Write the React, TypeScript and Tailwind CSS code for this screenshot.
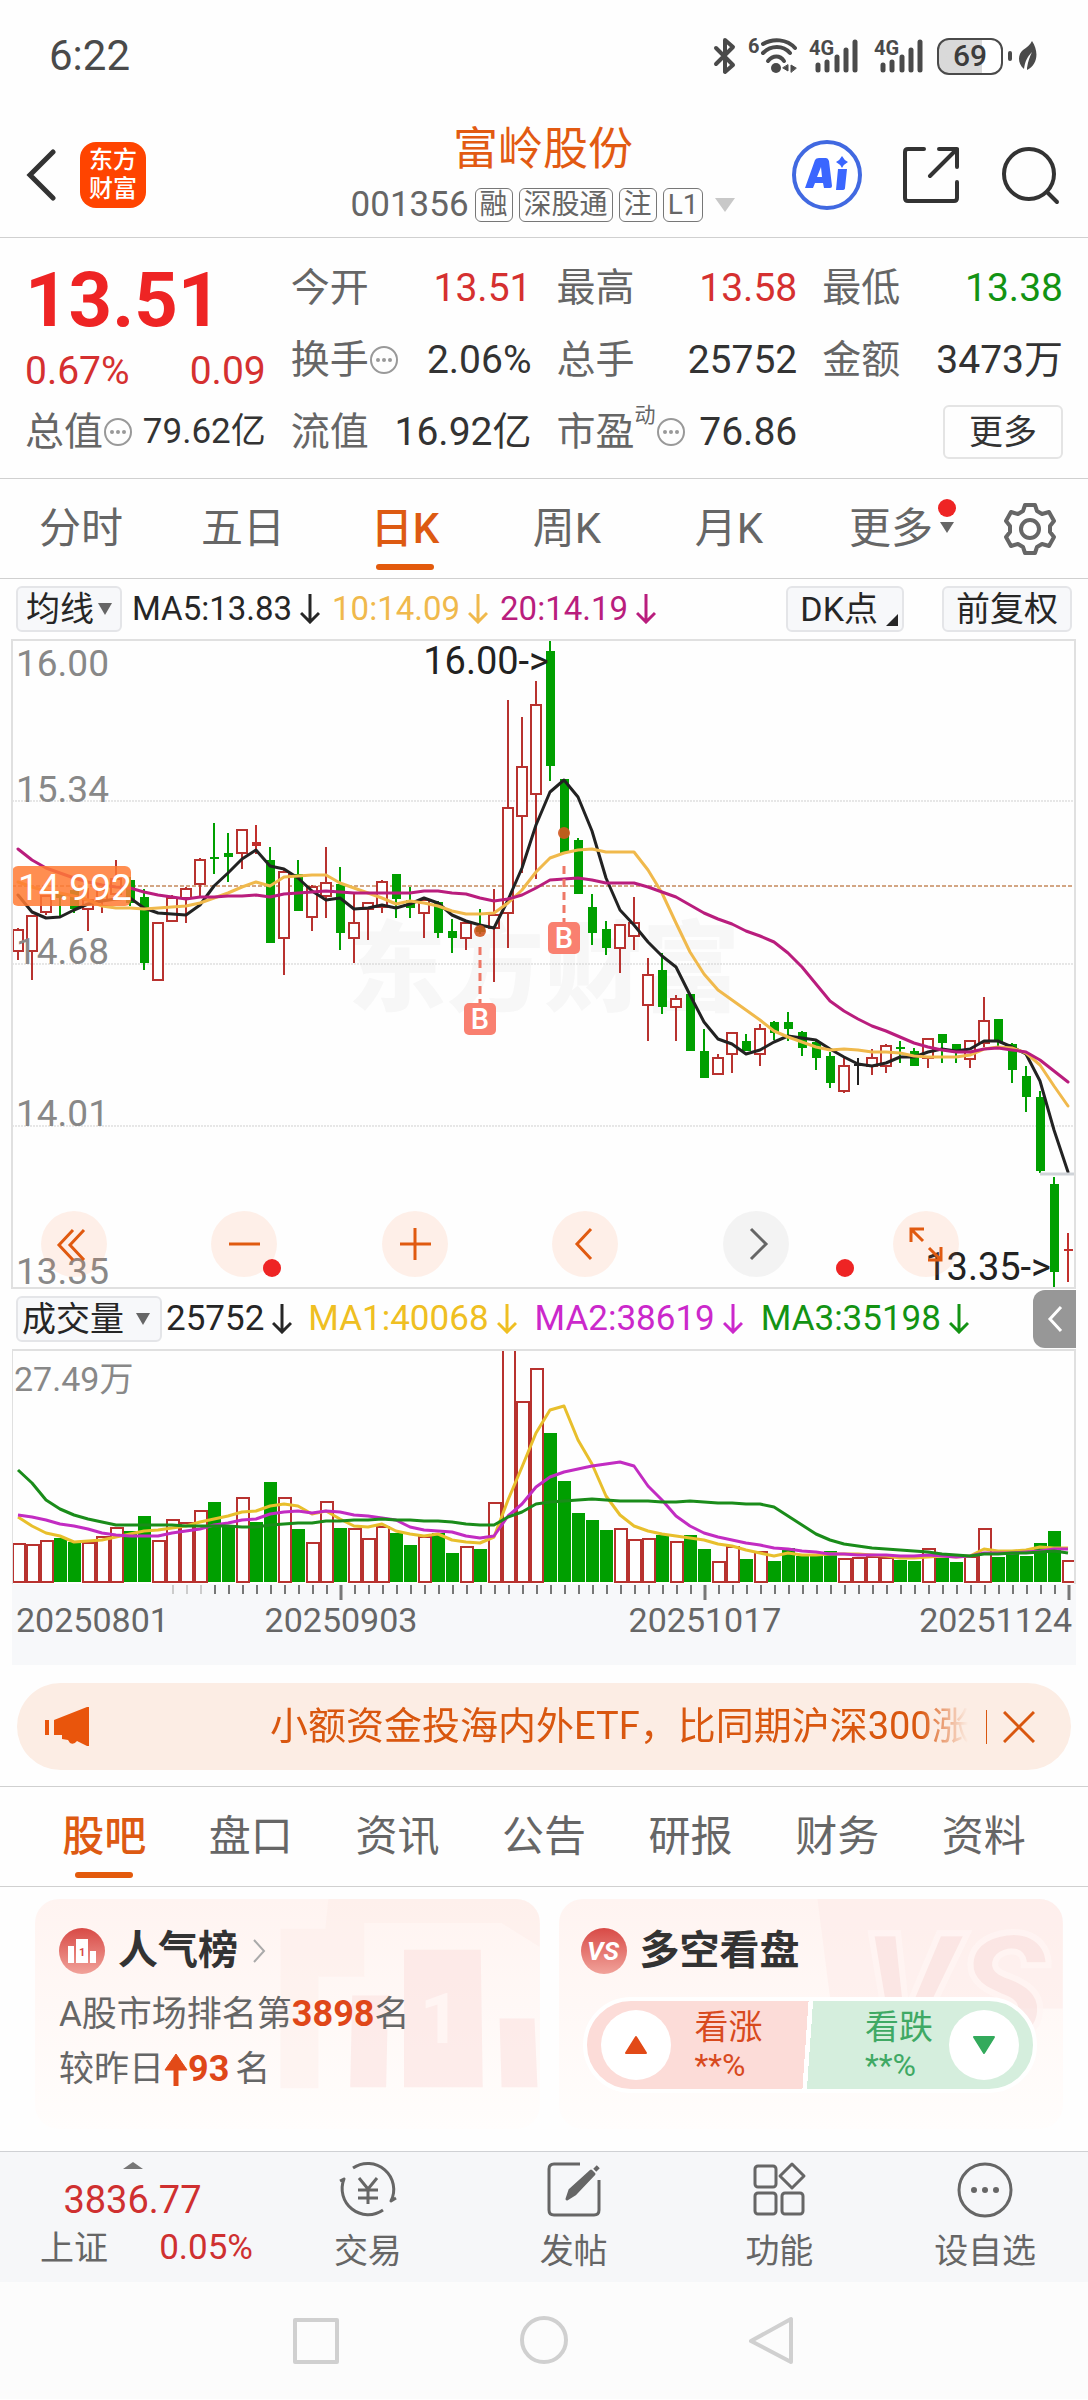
import React from "react";

const RED = "#b8322f";
const GREEN = "#009f00";

type Kind = "r" | "g" | "R" | "k";
type Candle = [Kind, number, number, number, number];

const candles: Candle[] = [
  ["r", 289, 291, 312, 321], ["r", 276, 277, 312, 341], ["r", 256, 257, 273, 276], ["g", 254, 254, 259, 278],
  ["g", 248, 251, 270, 274], ["r", 249, 261, 270, 292], ["r", 248, 251, 261, 274], ["r", 221, 240, 255, 260],
  ["g", 238, 241, 264, 267], ["g", 250, 258, 324, 331], ["r", 283, 284, 341, 341], ["r", 256, 259, 282, 282],
  ["r", 248, 250, 259, 284], ["r", 219, 221, 245, 258], ["g", 184, 218, 220, 235], ["g", 194, 214, 218, 243],
  ["r", 190, 191, 214, 230], ["R", 186, 203, 207, 215], ["g", 208, 221, 304, 304], ["r", 231, 233, 299, 336],
  ["g", 221, 235, 272, 272], ["r", 246, 248, 278, 292], ["r", 208, 244, 257, 279], ["g", 228, 245, 294, 311],
  ["r", 254, 284, 299, 324], ["r", 264, 264, 270, 301], ["r", 241, 243, 268, 274], ["g", 235, 235, 260, 279],
  ["g", 248, 261, 269, 279], ["r", 260, 261, 274, 299], ["g", 262, 263, 294, 299], ["g", 280, 292, 299, 314],
  ["r", 283, 284, 299, 311], ["g", 270, 288, 293, 295], ["r", 250, 276, 289, 343], ["r", 61, 169, 274, 309],
  ["r", 78, 128, 177, 234], ["r", 42, 66, 155, 240], ["g", 0, 12, 127, 142], ["g", 140, 140, 214, 214],
  ["g", 199, 201, 255, 255], ["g", 255, 268, 294, 306], ["g", 282, 290, 309, 316], ["r", 285, 286, 309, 334],
  ["r", 258, 284, 297, 311], ["r", 319, 336, 366, 402], ["g", 314, 331, 368, 375], ["r", 356, 360, 368, 402],
  ["g", 355, 355, 412, 412], ["g", 390, 412, 439, 439], ["r", 415, 419, 435, 435], ["r", 393, 394, 415, 434],
  ["g", 395, 402, 412, 412], ["r", 385, 390, 415, 427], ["g", 382, 383, 394, 401], ["g", 373, 383, 390, 402],
  ["g", 392, 393, 409, 417], ["g", 402, 403, 419, 431], ["g", 413, 417, 444, 449], ["r", 419, 427, 452, 454],
  ["k", 419, 425, 427, 446], ["r", 410, 419, 427, 436], ["r", 405, 407, 427, 434], ["g", 402, 408, 410, 424],
  ["g", 409, 412, 427, 427], ["r", 399, 400, 419, 429], ["g", 395, 395, 404, 424], ["g", 405, 405, 414, 424],
  ["r", 401, 402, 420, 429], ["r", 358, 382, 404, 408], ["g", 380, 380, 403, 410], ["g", 404, 405, 431, 444],
  ["g", 427, 437, 458, 473], ["g", 452, 458, 532, 534], ["g", 538, 545, 633, 649], ["R", 594, 610, 612, 643],
];

const ma5 = [
  256, 273, 279, 278, 271, 265, 262, 260, 259, 269, 274, 275, 276, 266, 247, 234, 220, 211, 227, 230, 239, 252, 261,
  259, 270, 269, 266, 269, 265, 259, 264, 276, 282, 286, 289, 261, 229, 186, 153, 141, 158, 192, 239, 271, 286, 303,
  317, 328, 356, 383, 400, 405, 415, 411, 403, 397, 399, 401, 410, 418, 425, 427, 424, 418, 418, 413, 410, 412, 410,
  402, 402, 408, 415, 442, 491, 533,
];
const ma10 = [
  243, 248, 252, 254, 257, 261, 267, 269, 269, 270, 269, 268, 267, 264, 259, 254, 248, 243, 247, 238, 237, 236, 236,
  244, 249, 254, 259, 265, 262, 264, 267, 272, 275, 275, 274, 264, 251, 233, 219, 214, 211, 210, 213, 213, 213, 231,
  254, 284, 313, 335, 351, 361, 371, 381, 392, 398, 403, 408, 411, 410, 411, 413, 413, 414, 417, 418, 418, 418, 416,
  410, 408, 409, 414, 426, 447, 467,
];
const ma20 = [
  210, 221, 229, 234, 239, 243, 246, 248, 249, 253, 256, 258, 260, 258, 258, 257, 257, 256, 258, 255, 254, 253, 252,
  253, 254, 254, 254, 254, 254, 252, 252, 254, 255, 259, 262, 260, 256, 249, 241, 240, 239, 241, 244, 244, 244, 248,
  253, 258, 266, 274, 280, 285, 292, 297, 303, 314, 328, 345, 362, 372, 380, 387, 392, 398, 404, 408, 411, 413, 413,
  410, 409, 411, 413, 421, 432, 443,
];

const volumes = [
  39, 38, 42, 44, 40, 40, 46, 55, 51, 66, 42, 63, 60, 72, 80, 57, 85, 60, 100, 85, 53, 40, 81, 54, 54, 44, 56, 49, 37,
  46, 49, 29, 36, 33, 80, 233, 181, 214, 149, 101, 69, 62, 52, 54, 43, 44, 47, 41, 47, 33, 21, 36, 23, 31, 21, 34, 26,
  26, 31, 24, 25, 26, 25, 22, 21, 34, 24, 20, 26, 54, 25, 29, 26, 39, 51, 22,
];
const vma1 = [
  65, 56, 49, 46, 40, 41, 42, 45, 48, 51, 52, 54, 56, 60, 63, 66, 70, 71, 76, 78, 76, 68, 71, 63, 56, 55, 58, 51, 48,
  46, 48, 42, 40, 39, 45, 82, 115, 149, 172, 176, 142, 118, 86, 67, 56, 51, 48, 46, 44, 42, 38, 36, 32, 29, 26, 29, 27,
  27, 28, 28, 28, 27, 26, 24, 24, 25, 26, 25, 26, 33, 31, 31, 32, 35, 34, 34,
];
const vma2 = [
  67, 65, 62, 58, 56, 53, 49, 47, 46, 46, 46, 49, 51, 53, 57, 59, 62, 63, 68, 70, 71, 69, 71, 70, 67, 66, 64, 62, 55,
  52, 51, 50, 46, 44, 46, 66, 78, 95, 105, 110, 113, 116, 118, 120, 116, 96, 82, 66, 56, 49, 45, 42, 39, 37, 34, 33, 31,
  30, 28, 28, 27, 27, 27, 26, 26, 27, 26, 25, 26, 29, 29, 29, 30, 31, 33, 33,
];
const vma3 = [
  112, 99, 82, 73, 67, 63, 60, 57, 57, 57, 57, 57, 56, 56, 56, 56, 55, 55, 57, 58, 59, 59, 61, 61, 62, 62, 63, 62, 62,
  61, 61, 60, 58, 57, 57, 65, 70, 78, 80, 81, 82, 83, 82, 81, 81, 81, 80, 80, 81, 80, 79, 79, 78, 78, 75, 66, 57, 48,
  42, 38, 36, 34, 33, 32, 31, 30, 28, 27, 26, 28, 28, 29, 29, 30, 31, 29,
];

const cx = (i: number) => 6 + 14 * i;
const line = (values: number[], map: (v: number) => number = (v) => v) =>
  values.map((v, i) => `${cx(i)},${map(v)}`).join(" ");

/* ---------- status bar ---------- */

function Signal() {
  return (
    <svg viewBox="0 0 50 38" className="h-[38px] w-[50px] overflow-visible" aria-hidden="true">
      <text x="0" y="18" fontSize="20" fontWeight="700" fill="#4a4a4a">4G</text>
      {[[9, 26], [18, 23], [28, 18], [37, 11], [46, 3]].map(([x, y]) => (
        <line key={x} x1={x} x2={x} y1={y + 2} y2="33" stroke="#4a4a4a" strokeWidth="5" strokeLinecap="round" />
      ))}
    </svg>
  );
}

function StatusBar() {
  return (
    <div className="flex items-center justify-between pt-9 pr-[50px] pb-8 pl-[49px]">
      <span className="text-[42px] leading-10 text-[#4a4a4a]">6:22</span>
      <div className="flex items-center">
        <svg viewBox="0 0 24 38" className="h-[38px] w-6" fill="none" stroke="#4a4a4a" strokeWidth="4" strokeLinejoin="round" strokeLinecap="round" aria-hidden="true">
          <path d="M3 11 L20 28 L12 35 V3 L20 10 L3 27" />
        </svg>
        <svg viewBox="0 0 52 38" className="ml-3 h-[38px] w-[52px] overflow-visible" fill="none" stroke="#4a4a4a" strokeWidth="4" strokeLinecap="round" aria-hidden="true">
          <text x="-1" y="16" fontSize="20" fontWeight="700" fill="#4a4a4a" stroke="none">6</text>
          <path d="M14 7 C24 1 38 2 46 11" />
          <path d="M14 16 C22 8 34 8 41 16" />
          <path d="M19 24 C24 18 31 18 35 24" />
          <circle cx="27" cy="31" r="5" fill="#4a4a4a" stroke="none" />
          <path d="M39 28v6l-5-3zM42 35v-7l5 3z" fill="#4a4a4a" stroke="#4a4a4a" strokeWidth="1" />
        </svg>
        <div className="ml-2"><Signal /></div>
        <div className="ml-[15px]"><Signal /></div>
        <div className="ml-[13px] h-[37px] w-[66px] rounded-xl border-2 border-[#4a4a4a] bg-linear-to-r from-[#d9d9d9] from-70% to-white to-70% text-center text-[30px] leading-8 font-medium text-[#3c3c3c]">
          69
        </div>
        <div className="ml-[5px] h-2.5 w-1 rounded bg-[#4a4a4a]" />
        <svg viewBox="0 0 20 30" className="ml-1.5 h-[30px] w-5" fill="#4a4a4a" aria-hidden="true">
          <path d="M14 0 C21 10 20 24 9 29 L9 27 C10 20 12 15 14 11 C9 16 7 21 6 28 C-1 22 0 13 5 9 C9 6 12 4 14 0Z" />
        </svg>
      </div>
    </div>
  );
}

/* ---------- header ---------- */

function Tag({ children }: { children: React.ReactNode }) {
  return <span className="rounded-md border border-[#777] px-1 text-[28px] leading-8">{children}</span>;
}

function Header() {
  return (
    <header className="grid grid-cols-[1fr_auto_1fr] items-center border-b border-[#d0d0d0] pt-3 pr-7 pb-[7px] pl-[26px]">
      <div className="flex items-center">
        <button aria-label="返回" className="pr-6">
          <svg viewBox="0 0 30 54" className="h-[54px] w-[30px]" fill="none" stroke="#333" strokeWidth="5" strokeLinecap="round">
            <path d="M27 4 L4 27 L27 50" />
          </svg>
        </button>
        <div className="grid h-[66px] w-[66px] content-center rounded-2xl bg-[#ff4400] text-center text-[24px] leading-[29px] font-medium text-white">
          <span>东方</span>
          <span>财富</span>
        </div>
      </div>
      <div className="flex flex-col items-center">
        <h1 className="text-[45px] leading-[60px] text-[#e25a12]">富岭股份</h1>
        <div className="flex h-[50px] items-center gap-1.5 text-[35px] text-[#666]">
          <span>001356</span>
          <Tag>融</Tag>
          <Tag>深股通</Tag>
          <Tag>注</Tag>
          <Tag>L1</Tag>
          <svg viewBox="0 0 20 14" className="ml-1.5 h-3.5 w-5" fill="#c8c8c8" aria-hidden="true"><path d="M0 0H20L10 14Z" /></svg>
        </div>
      </div>
      <div className="flex items-center justify-end gap-[41px]">
        <button aria-label="AI">
          <svg viewBox="0 0 70 70" className="h-[70px] w-[70px]">
            <circle cx="35" cy="35" r="33" fill="white" stroke="#4169e1" strokeWidth="4" />
            <path fillRule="evenodd" d="M13 48 L23 20 Q24 18 27 18 H34 Q36 18 37 21 L40 46 Q40 48 38 48 H32 L31 43 H23 L21 48Z M25 37 H30 L29 27Z" fill="#3a66ff" />
            <path d="M46 29 H55 L53 48 Q53 50 50 50 H44 Z" fill="#3a66ff" />
            <path d="M50 16 Q52 20 56 22 Q52 24 50 28 Q48 24 44 22 Q48 20 50 16Z" fill="#3a66ff" />
          </svg>
        </button>
        <button aria-label="分享">
          <svg viewBox="0 0 56 58" className="h-[58px] w-14" fill="none" stroke="#333" strokeWidth="4" strokeLinecap="round" strokeLinejoin="round">
            <path d="M21 3 H5 Q2 3 2 6 V52 Q2 55 5 55 H51 Q54 55 54 52 V36" />
            <path d="M36 3 H54 V21 M54 3 L27 30" />
          </svg>
        </button>
        <button aria-label="搜索">
          <svg viewBox="0 0 60 60" className="h-[60px] w-[60px]" fill="none" stroke="#333" strokeWidth="4" strokeLinecap="round">
            <circle cx="29" cy="29" r="25" />
            <path d="M47 47 L57 57" />
          </svg>
        </button>
      </div>
    </header>
  );
}

/* ---------- quote ---------- */

function Info() {
  return (
    <svg viewBox="0 0 30 30" className="h-[30px] w-[30px] shrink-0" fill="none" stroke="#999" strokeWidth="2" aria-hidden="true">
      <circle cx="15" cy="15" r="13" />
      <g fill="#999" stroke="none"><circle cx="9" cy="15" r="2" /><circle cx="15" cy="15" r="2" /><circle cx="21" cy="15" r="2" /></g>
    </svg>
  );
}

function Stat({ label, value, tone = "text-[#333]", info = false, sup }: { label: string; value: string; tone?: string; info?: boolean; sup?: string }) {
  return (
    <div className="flex h-[72px] items-center justify-between whitespace-nowrap">
      <dt className="flex items-center text-[39px] text-[#666]">
        {label}
        {sup && <span className="self-start text-[21px] leading-6">{sup}</span>}
        {info && <Info />}
      </dt>
      <dd className={"text-[39px] " + tone}>{value}</dd>
    </div>
  );
}

function Quote() {
  return (
    <section className="border-b border-[#d0d0d0] px-[25px] pt-3.5 pb-2.5">
      <dl className="grid grid-cols-4 gap-x-[25px]">
        <div className="row-span-2 flex flex-col">
          <dd aria-label="最新价" className="text-[76px] leading-[96px] font-bold text-[#ee2424]">13.51</dd>
          <dd className="flex justify-between text-[39px] leading-[46px] text-[#d53030]">
            <span>0.67%</span>
            <span>0.09</span>
          </dd>
        </div>
        <Stat label="今开" value="13.51" tone="text-[#d53030]" />
        <Stat label="最高" value="13.58" tone="text-[#d53030]" />
        <Stat label="最低" value="13.38" tone="text-[#139313]" />
        <Stat label="换手" value="2.06%" info />
        <Stat label="总手" value="25752" />
        <Stat label="金额" value="3473万" />
        <div className="flex h-[72px] items-center justify-between whitespace-nowrap">
          <dt className="flex items-center text-[39px] text-[#666]">总值<Info /></dt>
          <dd className="text-[35px] text-[#333]">79.62亿</dd>
        </div>
        <Stat label="流值" value="16.92亿" />
        <Stat label="市盈" value="76.86" info sup="动" />
        <div className="flex items-center justify-end">
          <button className="rounded-md border-2 border-[#e4e4e4] px-6 text-[34px] leading-[50px] text-[#333]">更多</button>
        </div>
      </dl>
    </section>
  );
}

/* ---------- period tabs ---------- */

const periods = ["分时", "五日", "日K", "周K", "月K"];

function PeriodTabs() {
  return (
    <nav className="flex items-center border-b border-[#d0d0d0] text-[42px] leading-[99px] text-[#666]">
      <div className="grid grow grid-cols-6">
        {periods.map((p) => (
          <button key={p} className={p === "日K" ? "relative font-medium text-[#dd5a12]" : "relative"}>
            {p}
            {p === "日K" && <span className="absolute bottom-2 left-1/2 h-1.5 w-[58px] -translate-x-1/2 rounded-full bg-[#e35a0c]" />}
          </button>
        ))}
        <button className="relative">
          更多
          <span className="absolute top-5 right-4 h-[18px] w-[18px] rounded-full bg-[#ee2424]" />
          <svg viewBox="0 0 14 11" className="absolute top-[43px] right-[18px] h-[11px] w-3.5" fill="#666" aria-hidden="true"><path d="M0 0H14L7 11Z" /></svg>
        </button>
      </div>
      <button aria-label="设置" className="flex w-[116px] justify-center">
        <svg viewBox="0 0 52 54" className="h-[54px] w-[52px]" fill="none" stroke="#666" strokeWidth="4" strokeLinejoin="round">
          <path d="M21 3 H31 L33 9 L38 12 L45 10 L50 19 L46 24 V30 L50 35 L45 44 L38 42 L33 45 L31 51 H21 L19 45 L14 42 L7 44 L2 35 L6 30 V24 L2 19 L7 10 L14 12 L19 9Z" />
          <circle cx="26" cy="27" r="9" />
        </svg>
      </button>
    </nav>
  );
}

/* ---------- charts ---------- */

function Down() {
  return (
    <svg viewBox="0 0 20 30" className="ml-2 h-[30px] w-5" fill="none" stroke="currentColor" strokeWidth="3" aria-hidden="true">
      <path d="M10 0V28M1 19L10 28L19 19" />
    </svg>
  );
}

function Caret() {
  return <svg viewBox="0 0 14 12" className="h-3 w-3.5" fill="#666" aria-hidden="true"><path d="M0 0H14L7 12Z" /></svg>;
}

const chip = "flex h-[46px] items-center whitespace-nowrap rounded-md border-2 border-[#e4e5e8] bg-[#f7f8fa] text-[34px] leading-10 text-[#262626]";

function MaLegend() {
  return (
    <div className="flex h-[60px] items-center pr-4 pl-4 text-[33px] whitespace-nowrap">
      <button className={chip + " gap-1 px-2"}>均线<Caret /></button>
      <span className="ml-2.5 flex items-center text-[#262626]">MA5:13.83<Down /></span>
      <span className="ml-3 flex items-center text-[#f0b94c]">10:14.09<Down /></span>
      <span className="ml-3 flex items-center text-[#b91d7d]">20:14.19<Down /></span>
      <button className={chip + " ml-auto gap-2 pr-1 pl-3"}>
        DK点
        <svg viewBox="0 0 12 12" className="mb-1 h-3 w-3 self-end" fill="#262626" aria-hidden="true"><path d="M12 0V12H0Z" /></svg>
      </button>
      <button className={chip + " ml-[38px] px-3"}>前复权</button>
    </div>
  );
}

function Marker({ x, dot, top }: { x: number; dot: number; top: number }) {
  return (
    <g>
      <circle cx={x} cy={dot} r="6" fill="#d0571f" fillOpacity="0.9" />
      <line x1={x} x2={x} y1={top - 56} y2={top} stroke="#ee7766" strokeWidth="3" strokeDasharray="8 5" />
      <rect x={x - 16} y={top} width="32" height="32" rx="5" fill="#f98070" />
      <text x={x} y={top + 26} fontSize="29" fontWeight="500" fill="white" textAnchor="middle">B</text>
    </g>
  );
}

function PriceChart() {
  return (
    <svg viewBox="0 0 1064 650" className="block w-full overflow-visible" role="img" aria-label="日K线图">
      <text x="532" y="364" fontSize="98" fontWeight="900" fill="#f7f7f7" textAnchor="middle">东方财富</text>
      {[162, 325, 487].map((y) => (
        <line key={y} x1="0" x2="1064" y1={y} y2={y} stroke="#cfcfcf" strokeWidth="1" strokeDasharray="2 1" />
      ))}
      <line x1="0" x2="1064" y1="247" y2="247" stroke="#c08050" strokeWidth="2" strokeDasharray="4 2" strokeOpacity="0.7" />
      {candles.map(([kind, high, top, bottom, low], i) => {
        const x = cx(i);
        if (kind === "r") {
          return (
            <g key={i} stroke={RED} strokeWidth="2">
              <path d={`M${x} ${high}V${top}M${x} ${bottom}V${low}`} />
              <rect x={x - 5} y={top} width="10" height={Math.max(bottom - top, 1)} fill="white" />
            </g>
          );
        }
        const color = kind === "g" ? GREEN : kind === "k" ? "#222" : "#c22f2c";
        return (
          <g key={i} fill={color}>
            <rect x={x - 1} y={high} width="2" height={low - high} />
            <rect x={x - 4} y={top} width="9" height={bottom - top} />
          </g>
        );
      })}
      <g fill="none" strokeWidth="3" strokeLinejoin="round" strokeLinecap="round">
        <polyline points={line(ma5)} stroke="#222" />
        <polyline points={line(ma10)} stroke="#f0b94c" />
        <polyline points={line(ma20)} stroke="#b91d7d" />
      </g>
      <line x1="1028" x2="1064" y1="535" y2="535" stroke="#cfd3d8" strokeWidth="3" />
      <Marker x={cx(33)} dot={292} top={364} />
      <Marker x={cx(39)} dot={194} top={283} />
      <g fontSize="37" fill="#888">
        <text x="4" y="37">16.00</text>
        <text x="4" y="163">15.34</text>
        <text x="4" y="325">14.68</text>
        <text x="4" y="487">14.01</text>
        <text x="4" y="645">13.35</text>
      </g>
      <g fontSize="38" fill="#222" textAnchor="end">
        <text x="537" y="35">16.00-&gt;</text>
        <text x="1039" y="641">13.35-&gt;</text>
      </g>
      <rect x="0" y="227" width="119" height="40" rx="6" fill="#ff7a33" fillOpacity="0.85" />
      <text x="6" y="261" fontSize="37" fill="white">14.992</text>
      <circle cx="833" cy="629" r="9" fill="#ee2424" />
      <path d="M0 0V650M1063 0V650" stroke="#e0e0e0" strokeWidth="2" />
      <path d="M0 1H1064M0 649H1064" stroke="#e0e0e0" strokeWidth="2" />
    </svg>
  );
}

const controls: { label: string; path: string; dot?: boolean; muted?: boolean }[] = [
  { label: "最早", path: "M32 19L18 34L32 49M43 19L29 34L43 49" },
  { label: "缩小", path: "M18 33H49", dot: true },
  { label: "放大", path: "M18 33H49M33 17V49" },
  { label: "向左", path: "M39 18L25 33L39 48" },
  { label: "向右", path: "M28 18L43 33L28 48", muted: true },
  { label: "全屏", path: "M18 31V18H31M19 19L30 30M36 37L48 49M35 49H48V36" },
];

function Controls() {
  return (
    <div className="absolute right-[11%] bottom-3 left-[29px] flex justify-between">
      {controls.map((c) => (
        <button
          key={c.label}
          aria-label={c.label}
          className={
            c.muted
              ? "relative h-[66px] w-[66px] rounded-full bg-[#f2f2f2]/90 text-[#666]"
              : "relative h-[66px] w-[66px] rounded-full bg-[#ff7a33]/11 text-[#e05a10]"
          }
        >
          <svg viewBox="0 0 66 66" className="h-full w-full" fill="none" stroke="currentColor" strokeWidth="3"><path d={c.path} /></svg>
          {c.dot && <span className="absolute -right-1 bottom-0 h-[18px] w-[18px] rounded-full bg-[#ee2424]" />}
        </button>
      ))}
    </div>
  );
}

function VolumeLegend() {
  return (
    <div className="flex h-[60px] items-center pl-1 text-[35px] whitespace-nowrap">
      <button className={chip + " gap-3 pr-2.5 pl-1"}>成交量<Caret /></button>
      <span className="ml-1 flex items-center text-[#262626]">25752<Down /></span>
      <span className="ml-4 flex items-center text-[#efbf22]">MA1:40068<Down /></span>
      <span className="ml-[18px] flex items-center text-[#cb28cb]">MA2:38619<Down /></span>
      <span className="ml-[18px] flex items-center text-[#139313]">MA3:35198<Down /></span>
      <button aria-label="展开" className="ml-auto flex h-[58px] w-[43px] items-center justify-center rounded-l-xl bg-[#979797]">
        <svg viewBox="0 0 16 28" className="h-7 w-4" fill="none" stroke="white" strokeWidth="3"><path d="M14 2L3 14L14 26" /></svg>
      </button>
    </div>
  );
}

function VolumeChart() {
  const flip = (v: number) => 233 - v;
  return (
    <svg viewBox="0 0 1064 316" className="block w-full" role="img" aria-label="成交量图">
      <rect x="0" y="235" width="1064" height="81" fill="#f7f8fa" />
      {volumes.map((v, i) => {
        const x = cx(i);
        const kind = candles[i][0];
        return kind === "g" || i === 17 ? (
          <rect key={i} x={x - 6} y={233 - v} width="13" height={v} fill={GREEN} />
        ) : (
          <rect key={i} x={x - 5} y={234 - v} width="12" height={v - 1} fill="white" stroke={RED} strokeWidth="2" />
        );
      })}
      <g fill="none" strokeWidth="3" strokeLinejoin="round">
        <polyline points={line(vma1, flip)} stroke="#e8bf2c" />
        <polyline points={line(vma2, flip)} stroke="#c22cc2" />
        <polyline points={line(vma3, flip)} stroke="#1a8c1a" />
      </g>
      <path d="M0 0V235M1063 0V235" stroke="#e0e0e0" strokeWidth="2" />
      <path d="M0 1H1064" stroke="#e0e0e0" strokeWidth="2" />
      <text x="2" y="42" fontSize="34" fill="#888">27.49万</text>
      {volumes.map((_, i) => {
        const major = i === 23 || i === 49 || i === 75;
        return i < 11 ? null : (
          <line key={i} x1={cx(i) + 1} x2={cx(i) + 1} y1="236" y2={major ? 251 : 245} stroke={i < 14 ? "#ccc" : "#777"} strokeWidth={major ? 3 : 2} />
        );
      })}
      <g fontSize="34" fill="#666">
        <text x="4" y="283">20250801</text>
        <text x="329" y="283" textAnchor="middle">20250903</text>
        <text x="693" y="283" textAnchor="middle">20251017</text>
        <text x="1060" y="283" textAnchor="end">20251124</text>
      </g>
    </svg>
  );
}

/* ---------- banner ---------- */

function Banner() {
  return (
    <div className="border-b border-[#d0d0d0] px-[17px] pt-[18px] pb-4">
      <div className="flex h-[87px] items-center rounded-full bg-[#fcede4] pr-9 pl-7 text-[#d9570f]">
        <svg viewBox="0 0 46 40" className="h-10 w-[46px] shrink-0" fill="#e9550c" aria-hidden="true">
          <path d="M0 13H4V28H0ZM9 13L42 0H44V39H42L32 34Q29 38 25 36L23 33L17 32V28H9Z" />
        </svg>
        <a href="#etf" className="ml-[179px] grow basis-0 overflow-hidden text-[38px] whitespace-nowrap [mask-image:linear-gradient(to_right,black_93%,transparent)]">
          小额资金投海内外ETF，比同期沪深300涨
        </a>
        <span className="ml-[18px] h-[34px] w-px bg-[#d9570f]" />
        <button aria-label="关闭" className="ml-4">
          <svg viewBox="0 0 32 32" className="h-8 w-8" fill="none" stroke="#d9570f" strokeWidth="3"><path d="M1 1L31 31M31 1L1 31" /></svg>
        </button>
      </div>
    </div>
  );
}

/* ---------- content tabs and cards ---------- */

const sections = ["股吧", "盘口", "资讯", "公告", "研报", "财务", "资料"];

function SectionTabs() {
  return (
    <nav className="grid grid-cols-7 border-b border-[#d0d0d0] px-[31px] text-[42px] leading-[99px] text-[#666]">
      {sections.map((s, i) => (
        <button key={s} className={i === 0 ? "relative font-medium text-[#dd5a12]" : "relative"}>
          {s}
          {i === 0 && <span className="absolute bottom-2 left-1/2 h-1.5 w-[58px] -translate-x-1/2 rounded-full bg-[#e35a0c]" />}
        </button>
      ))}
    </nav>
  );
}

function RankCard() {
  return (
    <article className="relative overflow-hidden rounded-3xl bg-linear-to-b from-[#fff4f1] to-[#fffdfc] px-6 pt-6 pb-8">
      <svg viewBox="0 0 260 231" className="absolute top-0 right-0 h-full w-[260px]" aria-hidden="true">
        <path d="M48 0H260V48L222 24H84V78H38V190H0V30H45Z" fill="#fdeae7" opacity="0.4" />
        <path d="M124 51H201L203 189H124ZM72 97H108L106 189H70ZM220 120H255L258 189H222Z" fill="#fbdedb" opacity="0.5" />
        <text x="140" y="145" fontSize="70" fontWeight="700" fill="#fff5f3">1</text>
      </svg>
      <div className="relative">
        <h2 className="flex items-center text-[40px] leading-[56px] font-bold text-[#333]">
          <svg viewBox="0 0 46 46" className="mr-[13px] h-[46px] w-[46px]" aria-hidden="true">
            <defs><linearGradient id="badge" x1="0" y1="0" x2="0" y2="1"><stop offset="0" stopColor="#d84a46" /><stop offset="1" stopColor="#f1a29a" /></linearGradient></defs>
            <circle cx="23" cy="23" r="23" fill="url(#badge)" />
            <path d="M9 18H15V35H9ZM17 11H29V35H17ZM31 23H37V35H31Z" fill="white" />
            <text x="20" y="28" fontSize="11" fontWeight="700" fill="#d84a46">1</text>
          </svg>
          人气榜
          <svg viewBox="0 0 14 24" className="ml-3.5 h-6 w-3.5" fill="none" stroke="#aaa" strokeWidth="2" aria-hidden="true"><path d="M2 1L12 12L2 23" /></svg>
        </h2>
        <p className="mt-2 text-[35px] leading-[55px] text-[#666]">A股市场排名第<b className="text-[36px] text-[#df4719]">3898</b>名</p>
        <p className="flex items-center text-[35px] leading-[55px] text-[#666]">
          较昨日
          <svg viewBox="0 0 24 32" className="h-8 w-6" fill="#e24a17" aria-hidden="true"><path d="M12 0L23 16H14V32H10V16H1Z" stroke="#e24a17" strokeWidth="1" /></svg>
          <b className="mr-1.5 text-[36px] text-[#df4719]">93</b>名
        </p>
      </div>
    </article>
  );
}

function VoteCard() {
  return (
    <article className="relative overflow-hidden rounded-3xl bg-linear-to-b from-[#fff4f1] to-[#fffdfc] px-[22px] pt-6 pb-6">
      <svg viewBox="0 0 250 231" className="absolute top-0 right-0 h-full w-[250px]" aria-hidden="true">
        <path d="M4 0H250V110H18Z" fill="#fdeae7" opacity="0.5" />
        <text x="48" y="142" fontSize="150" fontWeight="900" fontStyle="italic" fill="#fae2e0" opacity="0.7" stroke="#fff6f4" strokeWidth="6">VS</text>
      </svg>
      <div className="relative">
        <h2 className="flex items-center text-[40px] leading-[56px] font-bold text-[#333]">
          <svg viewBox="0 0 46 46" className="mr-[13px] h-[46px] w-[46px]" aria-hidden="true">
            <circle cx="23" cy="23" r="23" fill="url(#badge)" />
            <text x="22" y="32" fontSize="26" fontWeight="700" fontStyle="italic" fill="white" textAnchor="middle">VS</text>
          </svg>
          多空看盘
        </h2>
        <div className="mt-[18px] mr-1 ml-0.5 grid h-[96px] grid-cols-2 overflow-hidden rounded-full border-4 border-white bg-[linear-gradient(94deg,#fcdcd8_49%,white_49%,white_50%,#d5eedd_50%)] text-[34px] leading-10">
          <button className="flex items-center gap-6 pl-3.5 text-left text-[#d84a1e]">
            <span className="flex h-[70px] w-[70px] items-center justify-center rounded-full bg-white">
              <svg viewBox="0 0 24 20" className="h-5 w-6" fill="#e24a17" aria-hidden="true"><path d="M12 2L22 18H2Z" stroke="#e24a17" strokeWidth="2" strokeLinejoin="round" /></svg>
            </span>
            <span className="grid">看涨<span className="text-[32px] leading-9">**%</span></span>
          </button>
          <button className="flex items-center justify-end gap-4 pr-3.5 text-left text-[#3fa964]">
            <span className="grid">看跌<span className="text-[32px] leading-9">**%</span></span>
            <span className="flex h-[70px] w-[70px] items-center justify-center rounded-full bg-white">
              <svg viewBox="0 0 24 20" className="h-5 w-6" fill="#33aa5c" aria-hidden="true"><path d="M12 18L22 2H2Z" stroke="#33aa5c" strokeWidth="2" strokeLinejoin="round" /></svg>
            </span>
          </button>
        </div>
      </div>
    </article>
  );
}

/* ---------- bottom bars ---------- */

const actions: { label: string; icon: React.ReactNode }[] = [
  {
    label: "交易",
    icon: (
      <>
        <path d="M15 8A26 26 0 0 1 53 41L58 38" />
        <path d="M45 50A26 26 0 0 1 6 19L2 21" />
        <path d="M21 18L30 29L39 18M20 30H40M20 38H40M30 29V44" />
      </>
    ),
  },
  {
    label: "发帖",
    icon: (
      <>
        <path d="M36 4H10Q5 4 5 9V50Q5 55 10 55H50Q55 55 55 50V20" />
        <path d="M23 39L26 30L47 11L50 14L31 34Z" fill="#666" />
        <path d="M51 7L54 10" strokeWidth="5" />
      </>
    ),
  },
  {
    label: "功能",
    icon: (
      <>
        <rect x="6" y="6" width="21" height="21" rx="3" />
        <rect x="6" y="33" width="21" height="21" rx="3" />
        <rect x="33" y="33" width="21" height="21" rx="3" />
        <path d="M43 4L55 16L43 28L31 16Z" />
      </>
    ),
  },
  {
    label: "设自选",
    icon: (
      <>
        <circle cx="30" cy="30" r="26" />
        <g fill="#666" stroke="none"><circle cx="19" cy="30" r="3" /><circle cx="30" cy="30" r="3" /><circle cx="41" cy="30" r="3" /></g>
      </>
    ),
  },
];

function ActionBar() {
  return (
    <footer className="grid grid-cols-[265px_repeat(4,minmax(0,1fr))] border-t border-[#cfd1d4] bg-[#f6f7f9] pb-1.5 text-[#666]">
      <button className="flex flex-col items-center pt-2.5">
        <svg viewBox="0 0 20 7" className="h-[7px] w-5" fill="#777" aria-hidden="true"><path d="M0 7L10 0L20 7Z" /></svg>
        <span className="mt-2 text-[38px] leading-[46px] text-[#cf3030]">3836.77</span>
        <span className="flex w-full justify-between pr-3 pl-10 text-[34px] leading-[50px]">
          上证<span className="text-[35px] text-[#cf3030]">0.05%</span>
        </span>
      </button>
      {actions.map((a) => (
        <button key={a.label} className="flex flex-col items-center pt-2 text-[34px] leading-[50px]">
          <svg viewBox="0 0 60 60" className="mb-1.5 h-[60px] w-[60px]" fill="none" stroke="#666" strokeWidth="3" strokeLinejoin="round" aria-hidden="true">{a.icon}</svg>
          {a.label}
        </button>
      ))}
    </footer>
  );
}

function SystemNav() {
  return (
    <nav className="flex items-center justify-center gap-[180px] bg-[#fcfcfc] py-[34px]">
      {[
        ["最近任务", "M3 4H45V46H3Z"],
        ["主屏幕", "M24 2A22 22 0 1 1 24 46A22 22 0 1 1 24 2Z"],
        ["返回", "M43 3V46L3 25Z"],
      ].map(([label, d]) => (
        <button key={label} aria-label={label}>
          <svg viewBox="0 0 48 49" className="h-[49px] w-12" fill="none" stroke="#d0d0d0" strokeWidth="4" strokeLinejoin="round"><path d={d} /></svg>
        </button>
      ))}
    </nav>
  );
}

export default function App() {
  return (
    <div className="bg-[#fefefe] font-[Roboto,'Noto_Sans_CJK_SC',sans-serif]">
      <StatusBar />
      <Header />
      <Quote />
      <PeriodTabs />
      <MaLegend />
      <div className="mx-3">
        <div className="relative">
          <PriceChart />
          <Controls />
        </div>
        <VolumeLegend />
        <VolumeChart />
      </div>
      <Banner />
      <SectionTabs />
      <div className="grid grid-cols-2 gap-[19px] pt-3 pr-[25px] pb-[22px] pl-[35px]">
        <RankCard />
        <VoteCard />
      </div>
      <ActionBar />
      <SystemNav />
    </div>
  );
}
